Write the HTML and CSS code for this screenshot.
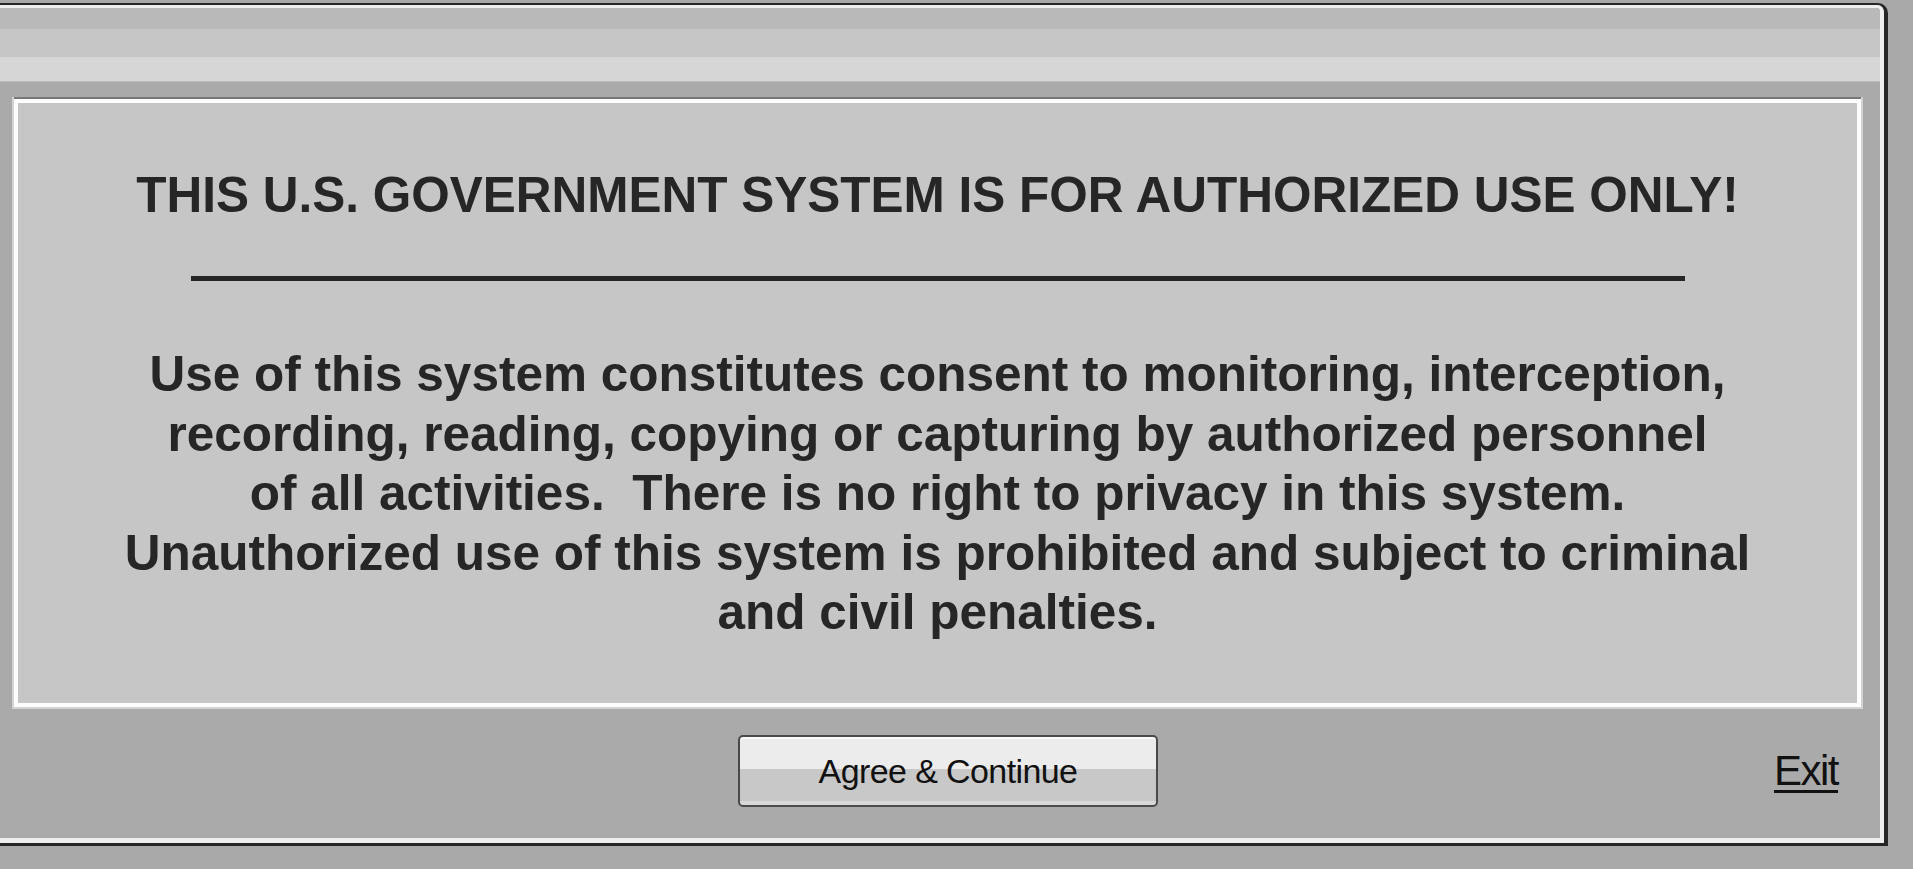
FILE: index.html
```html
<!doctype html>
<html lang="en">
<head>
	<meta charset="UTF-8">
	<title>Notice</title>
	<link rel="stylesheet" href="styles.css">
</head>
<body>
	<div class="window">
		<div class="frame">
			<div class="caption"></div>
			<div class="content">
				<div class="panel">
					<p class="title">THIS U.S. GOVERNMENT SYSTEM IS FOR AUTHORIZED USE ONLY!</p>
					<div class="rule"></div>
					<p class="notice">Use of this system constitutes consent to monitoring, interception,<br>recording, reading, copying or capturing by authorized personnel<br>of all activities.&nbsp; There is no right to privacy in this system.<br>Unauthorized use of this system is prohibited and subject to criminal<br>and civil penalties.</p>
				</div>
				<div class="footer">
					<span></span>
					<button class="agree">Agree &amp; Continue</button>
					<a class="exit" href="#">Exit</a>
				</div>
			</div>
		</div>
	</div>
</body>
</html>
```
FILE: styles.css
```css
html, body { margin:0; height:100%; overflow:hidden; }
body { background:#a9a9a9; font-family:"Liberation Sans", Arial, sans-serif; }
.window { margin:3px 25px 0 0; border:solid #262626; border-width:2px 4px 3px 0; border-top-right-radius:10px; background:#aaa; }
.frame { border:solid #eeeeee; border-width:3px 4px 5px 0; border-top-right-radius:7px; }
.caption { height:74px; background:linear-gradient(#b9b9b9 0 21px, #c6c6c6 21px 49px, #d6d6d6 49px 73px, #bcbcbc 73px); border-top-right-radius:5px; }
.content { padding:17px 19px 0 14px; }
.panel { background:#c6c6c6; border:4px solid #fdfdfd; padding:62px 0 62px; box-shadow:0 -2px 0 0 #787878, 0 0 0 2px #d3d3d3; text-align:center; color:#262626; font-weight:bold; font-size:49.5px; line-height:59.4px; }
.panel p { margin:0; }
.rule { width:1494px; height:5px; margin:52px auto 63px; background:#262626; }
.footer { height:128px; padding:0 23px 3px 44px; display:grid; grid-template-columns:1fr auto 1fr; align-items:center; }
.agree { width:420px; height:72px; padding:0; border:2px solid #4a4a4a; border-radius:5px; background:linear-gradient(#ececec 0 47%, #c8c8c8 47% 94%, #d8d8d8 94%); box-shadow:inset 0 2px 0 #fafafa; font-family:"Liberation Sans", Arial, sans-serif; font-size:34px; letter-spacing:-0.6px; color:#111; }
.exit { justify-self:end; font-size:42px; letter-spacing:-1.5px; color:#111; text-decoration:underline; text-decoration-thickness:3px; text-underline-offset:5px; }
```
